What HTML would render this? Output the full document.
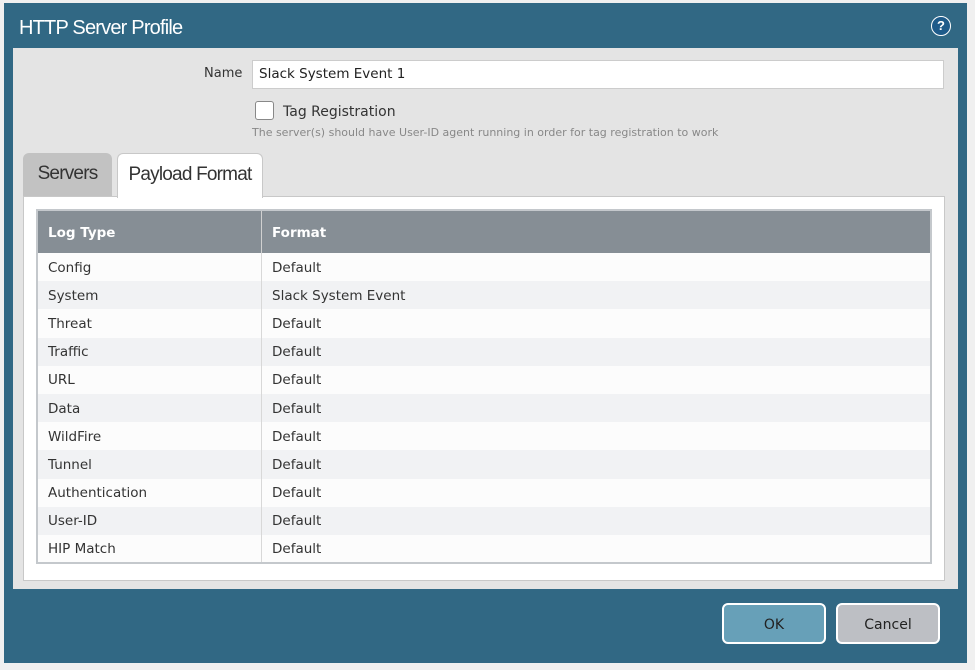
<!DOCTYPE html>
<html><head><style>
body{margin:0;width:975px;height:670px;background:#f0f0f0;position:relative;overflow:hidden;font-family:"DejaVu Sans","Liberation Sans",sans-serif;}
.dlg{position:absolute;left:4px;top:3px;width:963px;height:660px;background:#316884;}
.title{position:absolute;left:15px;top:14px;color:#fff;font-family:"Liberation Sans",sans-serif;font-size:20px;letter-spacing:-0.8px;}
.help{position:absolute;left:927px;top:13px;width:20px;height:20px;border-radius:50%;background:#1e5b8a;border:1px solid #fff;box-sizing:border-box;color:#fff;font:bold 13px "Liberation Sans",sans-serif;text-align:center;line-height:18px;}
.content{position:absolute;left:9px;top:45px;width:945px;height:541px;background:#e4e4e4;}
.lbl{position:absolute;font-size:13px;color:#333;}
.input{position:absolute;left:239px;top:12px;width:692px;height:29px;background:#fff;border:1px solid #ccc;box-sizing:border-box;font-size:13.5px;line-height:27px;padding-left:6px;color:#222;}
.cb{position:absolute;left:242px;top:53px;width:19px;height:19px;border:1px solid #888;border-radius:3px;background:#fff;box-sizing:border-box;}
.tab{position:absolute;top:105px;height:44px;border-radius:6px 6px 0 0;font-family:"Liberation Sans",sans-serif;font-size:19px;letter-spacing:-0.8px;line-height:42px;text-align:center;box-sizing:border-box;}
.panel{position:absolute;left:10px;top:148px;width:922px;height:385px;background:#fff;border:1px solid #c8c8c8;box-sizing:border-box;}
table{position:absolute;left:12px;top:12px;width:896px;border-collapse:collapse;border:2px solid #c4c8cc;}
th{background:#868e95;color:#fff;font-size:13.5px;text-align:left;height:40px;padding:2px 0 0 10px;border-left:1px solid #d0d0d0;}
td{font-size:13.5px;color:#333;height:28.2px;padding:1px 0 0 10px;border-left:1px solid #d8d8d8;box-sizing:border-box;}
.btn{position:absolute;top:600px;width:104px;height:41px;border:2px solid #fff;border-radius:6px;box-sizing:border-box;text-align:center;line-height:40px;font-size:14px;color:#222;}
</style></head><body>
<div class="dlg">
<div class="title">HTTP Server Profile</div>
<div class="help">?</div>
<div class="content">
<div class="lbl" style="left:191px;top:18px;">Name</div>
<div class="input">Slack System Event 1</div>
<div class="cb"></div>
<div class="lbl" style="left:270px;top:56px;font-size:14px;">Tag Registration</div>
<div class="lbl" style="left:239px;top:78px;font-size:11px;color:#888;">The server(s) should have User-ID agent running in order for tag registration to work</div>
<div class="tab" style="left:10px;width:89px;background:#c2c2c2;color:#333;">Servers</div>
<div class="tab" style="left:104px;width:146px;background:#fff;border:1px solid #c8c8c8;border-bottom:none;height:45px;color:#333;z-index:2;">Payload Format</div>
<div class="panel">
<table>
<tr><th style="width:213px;border-left:none;">Log Type</th><th>Format</th></tr>
<tbody>
<tr><td style="border-left:none;background:#fcfcfc">Config</td><td style="background:#fcfcfc">Default</td></tr>
<tr><td style="border-left:none;background:#f1f2f4">System</td><td style="background:#f1f2f4">Slack System Event</td></tr>
<tr><td style="border-left:none;background:#fcfcfc">Threat</td><td style="background:#fcfcfc">Default</td></tr>
<tr><td style="border-left:none;background:#f1f2f4">Traffic</td><td style="background:#f1f2f4">Default</td></tr>
<tr><td style="border-left:none;background:#fcfcfc">URL</td><td style="background:#fcfcfc">Default</td></tr>
<tr><td style="border-left:none;background:#f1f2f4">Data</td><td style="background:#f1f2f4">Default</td></tr>
<tr><td style="border-left:none;background:#fcfcfc">WildFire</td><td style="background:#fcfcfc">Default</td></tr>
<tr><td style="border-left:none;background:#f1f2f4">Tunnel</td><td style="background:#f1f2f4">Default</td></tr>
<tr><td style="border-left:none;background:#fcfcfc">Authentication</td><td style="background:#fcfcfc">Default</td></tr>
<tr><td style="border-left:none;background:#f1f2f4">User-ID</td><td style="background:#f1f2f4">Default</td></tr>
<tr><td style="border-left:none;background:#fcfcfc">HIP Match</td><td style="background:#fcfcfc">Default</td></tr>
</tbody>
</table>
</div>
</div>
<div class="btn" style="left:718px;background:#67a0b8;">OK</div>
<div class="btn" style="left:832px;background:#bdbfc4;">Cancel</div>
</div>
</body></html>
